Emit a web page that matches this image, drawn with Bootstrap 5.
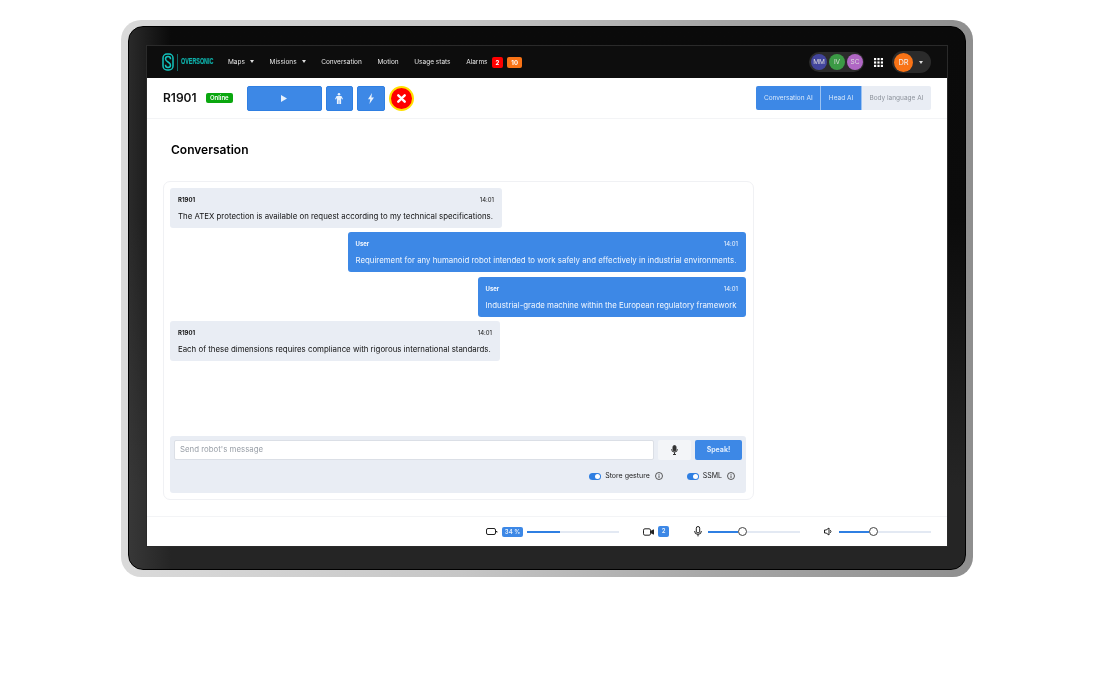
<!DOCTYPE html>
<html lang="en">
<head>
    <meta charset="UTF-8">
    <title>Oversonic - Conversation</title>
    <link href="https://cdn.jsdelivr.net/npm/bootstrap@5.3.2/dist/css/bootstrap.min.css" rel="stylesheet">
    <style>
        body { background: #fff; font-family: Inter, "Liberation Sans", sans-serif; color: #111; }
        .tablet-frame { width: 852px; height: 557px; margin: 20px 0 0 121px; padding: 6px 7px 7px; border-radius: 20px; will-change: transform;
            background: linear-gradient(90deg, #dadada, #c6c6c6 40%, #a6a6a6 70%, #8f8f8f); }
        .tablet-bezel { height: 100%; padding: 20px 19px 24px; border-radius: 15px; border: 1px solid #000;
            background: linear-gradient(90deg, rgba(74,74,74,.5), rgba(74,74,74,0) 5%), linear-gradient(#0a0a0a, #0b0b0b 35%, #252525 85%); }
        .tablet-screen { width: 800px; height: 500px; margin-left: -1px; margin-top: -1px; background: #fff; box-shadow: 0 0 0 1px #2a2a2a, -1px 0 0 #14104a; }
        .top-nav { height: 32px; background: #0d0d0d; padding: 0 16px 0 15px; font-size: 6.5px; color: #e6e6e6; }
        .logo-text { display: block; font-family: "Liberation Sans", sans-serif; font-size: 9px; font-weight: 700; color: #0fb0aa; white-space: nowrap; transform: scaleX(.6); transform-origin: left; width: 32px; -webkit-text-stroke: .2px #0fb0aa; }
        .logo-bar { width: 1px; height: 17px; background: #0e6b69; margin: 0 3px; }
        .nav-links { margin-left: 15px; gap: 15.6px; padding-top: 1px; }
        .caret-down { display: inline-block; border-top: 3px solid #ddd; border-left: 2.5px solid transparent; border-right: 2.5px solid transparent; margin-left: 5px; vertical-align: 1px; }
        .count-pill { font-size: 6px; font-weight: 700; color: #fff; border-radius: 2px; height: 11px; line-height: 11px; padding: 0 4px; }
        .avatar-group { background: #2b2b2b; border-radius: 10px; height: 20px; padding: 0 1px 0 2px; gap: 2px; margin-right: 10px; }
        .avatar-dot { width: 16px; height: 16px; border-radius: 50%; font-size: 6.5px; line-height: 16px; text-align: center; color: #ddd; }
        .user-group { background: #2b2b2b; border-radius: 12px; height: 22px; width: 39px; padding-left: 2px; margin-left: 9px; }
        .user-dot { width: 19px; height: 19px; border-radius: 50%; background: #f97316; font-size: 7.5px; line-height: 19px; text-align: center; color: #eee; }
        .robot-head { height: 41px; padding: 0 16px; border-bottom: 1px solid #f3f4f6; }
        .robot-name { font-size: 12px; font-weight: 600; width: 43px; }
        .status-pill { font-size: 6px; font-weight: 600; color: #fff; background: #0aa70f; border-radius: 2px; height: 10px; line-height: 10px; padding: 0 4px; margin-right: 14px; }
        .blue-btn { background: #3d88e6; border: 1px solid #2f7fe2; border-radius: 2px; height: 25px; padding: 0; }
        .stop-btn { width: 25px; height: 25px; border-radius: 50%; background: #f00; border: 2px solid #ffe000; }
        .ai-tab { height: 24px; line-height: 24px; padding: 0 7.6px; font-size: 6.5px; color: #d8e8fb; background: #3d88e6; border-right: 1px solid #9cc3f2; }
        .ai-tab.tab-first { border-radius: 2px 0 0 2px; }
        .ai-tab.tab-off { background: #e9edf4; color: #8d939c; border: 0; border-radius: 0 2px 2px 0; }
        .page-body { flex: 1; min-height: 0; padding: 0 16px; }
        .page-title { font-size: 12px; font-weight: 600; margin: 24px 0 0 8px; height: 38px; line-height: 14px; color: #000; }
        .chat-box { width: 591px; height: 319px; border: 1px solid #f0f1f4; border-radius: 7px; padding: 6px 7px 6px 6px; }
        .chat-list { height: 248px; gap: 4.33px; }
        .bubble { border-radius: 3px; height: 40px; padding: 8px 8px 0; font-size: 7.85px; }
        .bubble-robot { background: #e9edf4; color: #111; align-self: flex-start; }
        .bubble-user { background: #3d88e6; color: #f2f7fe; align-self: flex-end; padding-left: 7.5px; }
        .bubble-who { font-size: 6px; font-weight: 700; line-height: 8px; }
        .bubble-time { font-size: 6px; line-height: 8px; }
        .bubble-text { line-height: 10px; margin-top: 7px; white-space: nowrap; }
        .composer { height: 57px; background: #e9edf4; border-radius: 3px; padding: 4px; }
        .msg-input { flex: 1; height: 20px; background: #fff; border: 1px solid #dbdfe6; border-radius: 2px; font-size: 7.85px; line-height: 16px; padding: 0 5px; color: #9aa0a8; }
        .mic-btn { width: 33px; height: 20px; background: #f3f5f8; border-radius: 2px; margin: 0 4px; }
        .speak-btn { width: 47px; height: 20px; background: #3d88e6; border-radius: 2px; font-size: 7px; font-weight: 700; color: #dcebfd; line-height: 20px; text-align: center; }
        .opt-row { font-size: 7px; color: #222; margin-top: 7px; padding-right: 7px; height: 18px; }
        .mini-switch { width: 12px; height: 7px; background: #2f7fe2; border-radius: 4px; position: relative; margin-right: 4px; }
        .mini-switch::after { content: ""; position: absolute; right: 1px; top: 1px; width: 5px; height: 5px; border-radius: 50%; background: #fff; }
        .info-mark { width: 8px; height: 8px; margin-left: 5px; }
        .bottom-bar { height: 30px; border-top: 1px solid #f3f4f6; padding: 0 16px 0 339px; }
        .bar-chip { background: #3d88e6; color: #e5f0fd; font-size: 6px; font-weight: 600; height: 10px; line-height: 10px; border-radius: 2px; text-align: center; }
        .slide-track { height: 2px; width: 92px; background: #e3e9f3; position: relative; }
        .slide-fill { position: absolute; left: 0; top: 0; height: 2px; background: #2f7fe2; }
        .slide-knob { position: absolute; top: -3.5px; width: 9px; height: 9px; border-radius: 50%; background: #fff; border: 1px solid #444; }
    </style>
</head>
<body class="m-0">
    <div class="tablet-frame">
        <div class="tablet-bezel">
            <div class="tablet-screen d-flex flex-column">
                <nav class="top-nav d-flex align-items-center">
                    <svg width="12" height="18" viewBox="0 0 12 18" fill="none" stroke="#12c4bd" stroke-width="1.5">
                        <rect x="1" y="1" width="10" height="16" rx="4"/>
                        <path d="M8.5 6.3V6a2.5 2.5 0 0 0-5 0c0 3 5 3 5 6a2.5 2.5 0 0 1-5 0v-.3"/>
                    </svg>
                    <span class="logo-bar"></span>
                    <span class="logo-text">OVERSONIC</span>
                    <div class="nav-links d-flex align-items-center">
                        <span>Maps<i class="caret-down"></i></span>
                        <span>Missions<i class="caret-down"></i></span>
                        <span>Conversation</span>
                        <span>Motion</span>
                        <span>Usage stats</span>
                        <span class="d-flex align-items-center gap-1">Alarms
                            <span class="count-pill" style="background:#f00">2</span>
                            <span class="count-pill" style="background:#f97316">10</span>
                        </span>
                    </div>
                    <div class="ms-auto d-flex align-items-center">
                        <div class="avatar-group d-flex align-items-center">
                            <span class="avatar-dot" style="background:#42459c">MM</span>
                            <span class="avatar-dot" style="background:#3b9a45">IV</span>
                            <span class="avatar-dot" style="background:#b067c4">SC</span>
                        </div>
                        <svg width="9" height="9" viewBox="0 0 9 9" fill="#fff">
                            <rect width="2.2" height="2.2"/><rect x="3.4" width="2.2" height="2.2"/><rect x="6.8" width="2.2" height="2.2"/>
                            <rect y="3.4" width="2.2" height="2.2"/><rect x="3.4" y="3.4" width="2.2" height="2.2"/><rect x="6.8" y="3.4" width="2.2" height="2.2"/>
                            <rect y="6.8" width="2.2" height="2.2"/><rect x="3.4" y="6.8" width="2.2" height="2.2"/><rect x="6.8" y="6.8" width="2.2" height="2.2"/>
                        </svg>
                        <div class="user-group d-flex align-items-center">
                            <span class="user-dot">DR</span>
                            <i class="caret-down" style="margin-left:6px"></i>
                        </div>
                    </div>
                </nav>

                <div class="robot-head d-flex align-items-center">
                    <span class="robot-name">R1901</span>
                    <span class="status-pill">Online</span>
                    <button class="blue-btn d-flex align-items-center justify-content-center" style="width:75px">
                        <svg width="6" height="7" viewBox="0 0 6 7" fill="#e8f1fc"><path d="M0 0l6 3.5L0 7z"/></svg>
                    </button>
                    <button class="blue-btn d-flex align-items-center justify-content-center ms-1" style="width:27px">
                        <svg width="8" height="11" viewBox="0 0 8 11" fill="#e8f1fc"><circle cx="4" cy="1.3" r="1.3"/><path d="M1.6 3h4.8L8 5.9l-.9.5-1-1.6V11H4.3V7.3h-.6V11H1.9V4.8l-1 1.6L0 5.9z"/></svg>
                    </button>
                    <button class="blue-btn d-flex align-items-center justify-content-center ms-1" style="width:28px">
                        <svg width="6" height="11" viewBox="0 0 6 11" fill="#e8f1fc"><path d="M4 0L0 6.2h2.3L1.4 11 6 4.4H3.4z"/></svg>
                    </button>
                    <button class="stop-btn d-flex align-items-center justify-content-center p-0 ms-1">
                        <svg width="9" height="9" viewBox="0 0 9 9" stroke="#fff" stroke-width="2.4" stroke-linecap="round"><path d="M1.3 1.3l6.4 6.4M7.7 1.3L1.3 7.7"/></svg>
                    </button>
                    <div class="ms-auto d-flex">
                        <span class="ai-tab tab-first">Conversation AI</span>
                        <span class="ai-tab">Head AI</span>
                        <span class="ai-tab tab-off">Body language AI</span>
                    </div>
                </div>

                <div class="page-body">
                    <div class="page-title">Conversation</div>
                    <div class="chat-box">
                        <div class="chat-list d-flex flex-column">
                            <div class="bubble bubble-robot" style="width:332px">
                                <div class="d-flex justify-content-between"><span class="bubble-who">R1901</span><span class="bubble-time">14:01</span></div>
                                <div class="bubble-text">The ATEX protection is available on request according to my technical specifications.</div>
                            </div>
                            <div class="bubble bubble-user" style="width:398px">
                                <div class="d-flex justify-content-between"><span class="bubble-who">User</span><span class="bubble-time">14:01</span></div>
                                <div class="bubble-text">Requirement for any humanoid robot intended to work safely and effectively in industrial environments.</div>
                            </div>
                            <div class="bubble bubble-user" style="width:268px">
                                <div class="d-flex justify-content-between"><span class="bubble-who">User</span><span class="bubble-time">14:01</span></div>
                                <div class="bubble-text">Industrial-grade machine within the European regulatory framework</div>
                            </div>
                            <div class="bubble bubble-robot" style="width:330px">
                                <div class="d-flex justify-content-between"><span class="bubble-who">R1901</span><span class="bubble-time">14:01</span></div>
                                <div class="bubble-text">Each of these dimensions requires compliance with rigorous international standards.</div>
                            </div>
                        </div>
                        <div class="composer">
                            <div class="d-flex align-items-center">
                                <div class="msg-input">Send robot's message</div>
                                <div class="mic-btn d-flex align-items-center justify-content-center">
                                    <svg width="7" height="10" viewBox="0 0 7 10" fill="none" stroke="#333" stroke-width="1"><rect x="2" y=".5" width="3" height="5.5" rx="1.5" fill="#333"/><path d="M.6 4.2a2.9 2.9 0 0 0 5.8 0M3.5 7.2V9.5M2 9.5h3"/></svg>
                                </div>
                                <div class="speak-btn">Speak!</div>
                            </div>
                            <div class="opt-row d-flex align-items-center justify-content-end">
                                <span class="mini-switch"></span><span>Store gesture</span>
                                <svg class="info-mark" viewBox="0 0 8 8" fill="none" stroke="#333" stroke-width=".8"><circle cx="4" cy="4" r="3.5"/><path d="M4 3.4v2.6M4 2v.8"/></svg>
                                <span class="mini-switch" style="margin-left:24px"></span><span>SSML</span>
                                <svg class="info-mark" viewBox="0 0 8 8" fill="none" stroke="#333" stroke-width=".8"><circle cx="4" cy="4" r="3.5"/><path d="M4 3.4v2.6M4 2v.8"/></svg>
                            </div>
                        </div>
                    </div>
                </div>

                <div class="bottom-bar d-flex align-items-center">
                    <svg width="12" height="7" viewBox="0 0 12 7" fill="none" stroke="#222" stroke-width="1"><rect x=".5" y=".5" width="9" height="6" rx="1.5"/><path d="M10.5 3v1h1" /></svg>
                    <span class="bar-chip ms-1" style="width:21px">34 %</span>
                    <div class="slide-track ms-1"><div class="slide-fill" style="width:33px"></div></div>
                    <svg class="ms-auto" width="11" height="8" viewBox="0 0 11 8" fill="none" stroke="#222" stroke-width="1"><rect x=".5" y=".8" width="7" height="6.4" rx="1.4"/><path d="M7.7 3.4l2.8-1.6v4.4L7.7 4.6" fill="#222"/></svg>
                    <span class="bar-chip ms-1" style="width:11px;height:11px">2</span>
                    <svg style="margin-left:25px" width="8" height="11" viewBox="0 0 8 11" fill="none" stroke="#222" stroke-width="1"><rect x="2.3" y=".5" width="3.4" height="6.4" rx="1.7"/><path d="M.6 5a3.4 3.4 0 0 0 6.8 0M4 8.4v2"/></svg>
                    <div class="slide-track" style="margin-left:6px"><div class="slide-fill" style="width:30px"></div><div class="slide-knob" style="left:30px"></div></div>
                    <svg style="margin-left:24px" width="8" height="9" viewBox="0 0 8 9" fill="none" stroke="#222" stroke-width="1"><path d="M.5 3v3h1.6L5 8V1L2.1 3zM6.4 3.2a2 2 0 0 1 0 2.6"/></svg>
                    <div class="slide-track" style="margin-left:7px"><div class="slide-fill" style="width:30px"></div><div class="slide-knob" style="left:30px"></div></div>
                </div>
            </div>
        </div>
    </div>
    <script src="https://cdn.jsdelivr.net/npm/bootstrap@5.3.2/dist/js/bootstrap.bundle.min.js"></script>
</body>
</html>
